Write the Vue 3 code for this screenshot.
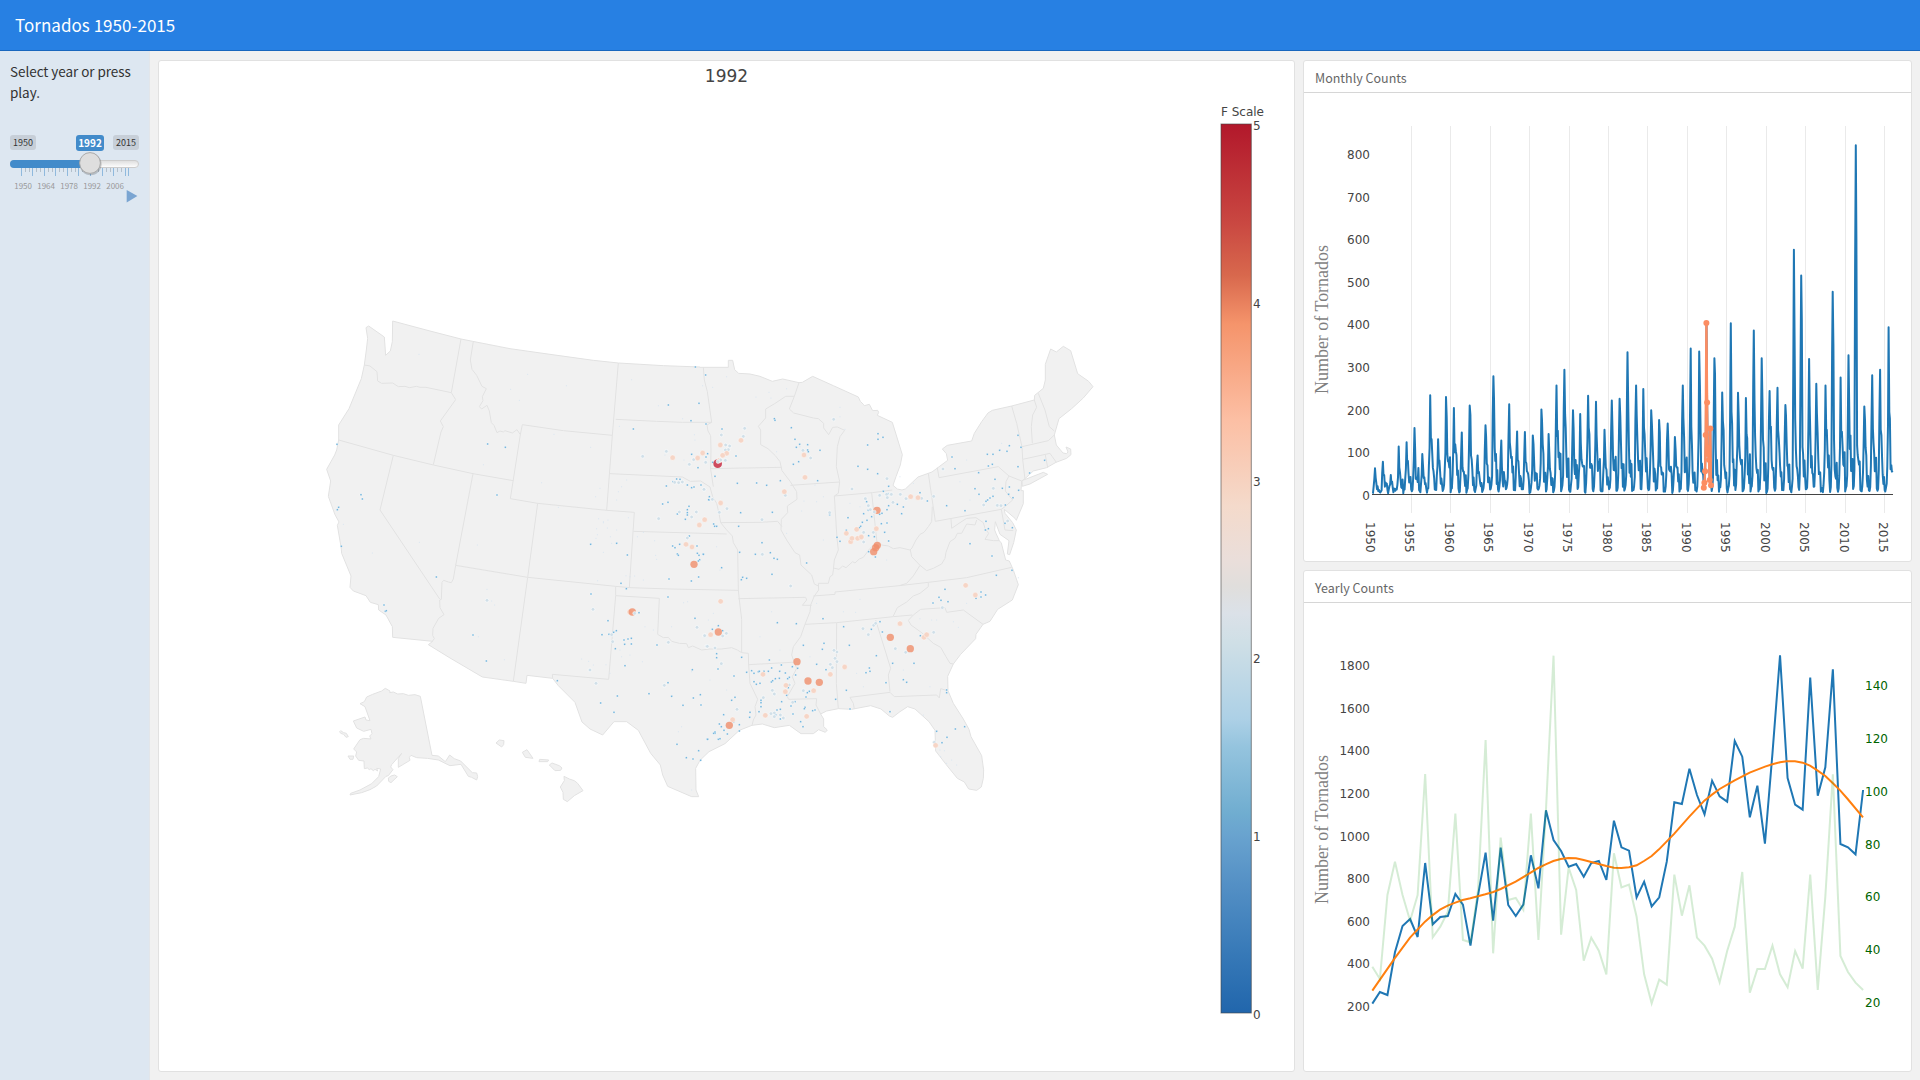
<script setup>
// Map geometry is stored in third-of-a-pixel units, in four quadrants.
const QUAD = { nw: [0, 0], sw: [0, 720], ne: [1170, 0], se: [1170, 720] }
const shift = (q, text) =>
  text.trim().split(/\s+/).map((p) => {
    const [x, y] = p.split(',').map(Number)
    return [x + QUAD[q][0], y + QUAD[q][1]]
  })
const toPath = (pts) => 'M' + pts.map((p) => p.join(' ')).join('L')

const mainland = toPath([
  ...shift('nw', '168,83 176,78 223,111 227,166 241,153 247,125 248,63 300,77 360,93 453,117 488,124 600,146 720,163 850,181 925,189 1060,197 1170,201'),
  ...shift('ne', '0,202 85,202 85,181 98,181 104,209 116,220 150,222 180,229 217,244 248,237 297,248 307,247 338,229 400,257 475,291 481,304 490,313 493,317 508,313 518,332 533,331 536,337 532,346 577,367 607,464 601,495 588,530 579,556 592,567 606,570 616,567 654,531 696,516 743,481 739,461 727,447 742,436 815,423 823,400 845,365 864,339 877,331 935,318 1003,300 1004,286 1030,265 1036,240 1036,193 1052,147 1069,156 1090,139 1112,152 1133,221 1166,244 1179,260 1150,294 1115,326 1077,356 1063,405 1069,435 1089,459 1100,461 1104,456 1098,441 1112,447 1113,464 1100,475 1068,487 1040,503 1000,513 975,536 965,543 963,572 970,572 970,611 949,661 945,655 913,628 915,640 938,668 949,690 941,728 929,764 922,762 927,722 900,703 886,665 884,690 888,700 898,722 904,729 917,780 928,783'),
  ...shift('se', '940,90 955,134 937,180 893,208 870,244 849,253 828,283 827,296 782,343 760,372 743,409 744,452 760,490 790,537 807,568 813,590 845,647 851,690 850,715 844,741 830,751 806,747 793,726 772,715 738,673 707,633 705,571 687,545 645,507 623,500 600,515 578,532 568,528 543,507 512,497 455,508 415,506 380,513 362,522 371,537 371,560 382,570 376,577 356,569 340,581 303,581 268,556 223,563 187,552 156,556 118,571 75,611 27,635 0,661'),
  ...shift('sw', '1157,685 1158,750 1166,770 1145,770 1073,739 1058,705 1051,675 1022,640 985,571 950,545 912,545 878,585 840,567 816,546 795,487 745,437 728,415 651,406 648,430 610,424 517,411 420,354 355,314 368,304 248,292 247,260 228,225 206,210 205,194 181,187 168,167 130,153 120,142 123,108 95,40'),
  ...shift('nw', '93,740 82,676 87,666 75,644 55,589 62,543 50,508 74,465 80,450 86,420 86,375 117,326 154,236 163,195 169,150 173,115'),
]) + 'Z'

const islands = [
  ['ne', '966,542 1030,517 1043,523 990,552 967,559'],
  ['sw', '226,445 240,453 239,458 250,456 263,462 280,461 295,466 315,464 331,469 366,646 385,648 406,665 419,645 433,656 452,663 487,698 500,699 503,710 500,720 485,712 475,709 453,673 420,677 385,660 352,655 320,653 303,646 298,652 300,661 265,682 265,655 275,640 245,674 242,681 249,689 235,707 228,709 200,738 180,749 155,758 120,765 122,760 150,750 185,731 206,710 212,687 200,685 203,693 195,688 190,692 183,686 178,689 172,684 163,686 162,663 146,661 137,648 140,636 131,627 150,599 161,595 183,597 179,588 186,581 183,568 161,574 140,564 130,543 165,531 168,540 180,542 165,500 150,491 163,485 170,471 188,463 215,453'],
  ['sw', '89,575 92,572 101,578 109,580 115,590 108,592 101,583 92,580'],
  ['sw', '114,648 131,648 129,658 120,658'],
  ['sw', '235,714 243,708 254,705 262,710 243,728 236,724'],
  ['sw', '558,609 568,600 582,602 581,614 575,621'],
  ['sw', '637,637 651,629 669,655 646,652'],
  ['sw', '689,658 716,660 713,665 687,665'],
  ['sw', '718,675 726,669 748,677 756,684 752,691 735,692'],
  ['sw', '762,709 778,717 793,722 803,730 819,752 793,767 772,785 760,778 759,757 751,741 763,722'],
].map(([q, t]) => toPath(shift(q, t)) + 'Z').join('')

const borders = [
  ['nw', '163,195 180,198 201,215 203,243 215,250 248,249 265,260 285,259 298,263 320,259 330,262 348,262 424,278'],
  ['nw', '453,117 424,278 437,299 391,363 400,380 393,396 370,494'],
  ['nw', '490,124 481,180 486,208 500,226 516,259 529,266 517,290 519,302 508,320 515,327 531,316 538,333 544,368 552,376 561,398 570,393 580,396 585,392 607,399 621,389 631,404'],
  ['nw', '86,420 250,466 370,495 489,521 610,542'],
  ['nw', '250,466 210,630 389,897'],
  ['nw', '489,521 437,796'],
  ['nw', '907,406 760,392 637,374 631,404 601,596 683,610 890,631 973,637 958,862'],
  ['nw', '925,189 907,406 890,631'],
  ['nw', '917,358 1040,364 1118,367 1205,367'],
  ['nw', '900,521 1117,531 1141,544 1172,543 1200,561 1208,590 1220,610 1227,640 1232,668 1250,690 1267,708 1270,728 1283,750 1285,870'],
  ['nw', '970,694 1250,702'],
  ['nw', '683,610 653,832 610,1144'],
  ['sw', '437,76 653,112 917,139 960,143 1080,147 1285,151'],
  ['sw', '437,76 430,117 424,128 415,126 401,121 396,127 394,178 389,180 390,203 402,224 386,235 369,265 368,286 373,296 366,305'],
  ['sw', '917,139 917,167 896,418 727,403 728,415'],
  ['sw', '917,167 1048,175 1043,283 1060,293 1075,292 1085,304 1108,310 1130,311 1135,323 1148,318 1175,330 1200,327 1235,327 1265,323 1282,330 1295,338'],
  ['ne', '10,202 13,240 22,275 35,367 21,375 24,393 32,407 33,450 32,508 40,560'],
  ['ne', '32,506 244,502'],
  ['ne', '62,668 180,667 233,664 246,680'],
  ['ne', '297,248 283,289 257,289 224,311 197,327 197,354 175,379 182,390 182,434 204,446 226,467 240,485 246,512 271,545 279,558 290,575 291,598 262,618 263,638 244,658 243,690 260,720 285,758 299,765 303,795 335,825 343,852 355,858'],
  ['ne', '283,289 268,327 281,339 340,354 355,356 371,370 371,384 386,404 398,382 412,381 434,391 420,410 412,440 409,500 419,545 415,580 403,588 517,578 577,570'],
  ['ne', '271,556 419,546'],
  ['ne', '403,588 411,715 415,750 403,780 400,810 398,825 390,830 385,850 355,850'],
  ['ne', '515,578 531,728'],
  ['ne', '400,804 417,808 428,798 438,803 458,785 465,789 478,777 490,772 510,745 531,728 545,735 565,738 580,746 600,743 630,750 636,744 648,720 660,703 672,697 685,680 695,665 697,620'],
  ['ne', '685,520 706,664 904,628 915,620 938,600 916,573 918,545 927,528 965,543'],
  ['ne', '712,503 717,533 895,500 912,515 927,528'],
  ['ne', '753,657 755,685 780,668 800,655 828,653 850,668 855,685 866,700 855,718 880,722 898,722'],
  ['ne', '830,660 825,675 800,672 785,700 772,700 765,715 750,725 738,757 735,775 725,792 700,805 680,812 660,796 635,770 631,750'],
  ['ne', '904,628 915,690 940,692'],
  ['ne', '935,318 950,370 966,440 968,478 975,538'],
  ['ne', '966,440 1045,422 1063,405'],
  ['ne', '1003,300 1010,322 998,345 994,380 997,430'],
  ['ne', '1015,280 1035,330 1048,380 1063,393'],
  ['ne', '968,478 1050,460 1057,470 1069,487'],
  ['ne', '1036,465 1043,503'],
  ['se', '340,168 405,163 405,156 598,137 685,127 800,113 935,82'],
  ['se', '598,137 620,130 640,108 660,76'],
  ['se', '685,127 685,140 660,160 640,168 620,186 592,203 580,228'],
  ['se', '315,253 410,248 580,230 637,225'],
  ['se', '849,253 790,210 740,217 735,203 662,208 640,225 625,241 633,255 665,278 700,310 722,322 738,350 750,370 760,372'],
  ['se', '410,248 409,430 415,506'],
  ['se', '527,240 555,330 572,385 565,405 570,455'],
  ['se', '463,507 460,490 450,472 570,457 583,470 710,465 718,474 722,446 743,452'],
  ['se', '355,130 356,150 343,168 332,195 330,215 315,253 302,290 280,320 275,345 283,367 290,385 277,410 285,430 262,470 266,478 350,476 348,495 362,522'],
  ['se', '115,176 317,172 320,180 307,196 335,196'],
  ['se', '115,150 118,180 125,238 125,338 145,340 146,375 150,430 173,478 165,500 168,525 160,540 156,556'],
  ['se', '146,374 275,367 285,367'],
].map(([q, t]) => toPath(shift(q, t))).join('')

const layers = [
  { cls: 'f0', r: 1.6, dots: [
    ['nw', '602,268 628,301 653,223 769,257 732,403 842,442 520,494 695,548 745,622 866,656 860,686 880,668 901,710 858,715 920,690 880,665 955,653 925,575 920,600 870,565 935,560 950,540 857,590 928,379 327,163 965,239 1045,317 1118,356 328,727 502,735 187,759 894,660 892,684 862,704 905,730 982,710 1037,766 1153,404 1178,257 100,673 1065,465 1122,480 1000,697 1034,722 880,757 1155,420'],
    ['sw', '531,148 545,183 554,195 505,290 583,359 948,107 960,110 974,108 997,365 960,345 935,350 815,357 888,374 836,364 850,375 900,400 1121,188 1133,185 1030,270 1085,260 1005,260 1145,395 1115,560 1145,750 1105,575 863,122 1040,58 930,330 1000,120'],
    ['ne', '260,266 213,294 80,230 168,291 38,262 207,277 420,322 420,350 435,388 312,603 345,555 305,633 370,590 350,605 230,455 300,440 450,610 480,620 600,530 640,550 780,545 810,600 905,430 800,480 50,740 260,700 370,720 560,780'],
    ['se', '480,178 467,217 430,215 350,190 660,236 710,240 760,245 775,262 695,240 800,190 215,215 180,290 60,90 40,220 330,350 470,400 490,440 610,390 690,440 720,630 733,632 740,670 722,650 755,660 770,675 670,525 955,113 240,330 80,450 30,420 25,240'],
  ] },
  { cls: 'f1', r: 3, dots: [
    ['nw', '1156,201 1187,225 1167,310 1075,315 1143,362 1188,372 970,387 81,433 533,432 586,442 153,584 157,597 86,622 82,629 94,739 561,585 842,733 920,730 952,765 1145,463 1164,503 1188,471 1193,461 1089,545 1100,537 1110,538 1069,558 1132,555 1145,563 1152,561 1173,555 1197,600 1058,612 1074,607 1137,619 1132,629 1132,638 1132,645 1102,642 1126,658 1138,708 1088,738 1095,743 1109,733 1132,736 1161,738 1102,762 1105,766 1162,760 1167,766 1180,763 1169,779 1165,783'],
    ['sw', '379,111 222,195 226,214 229,212 489,285 529,363 933,130 949,146 843,162 894,242 876,284 897,283 911,277 919,272 942,300 954,297 964,295 944,313 964,312 916,326 945,377 742,422 1074,428 922,468 872,489 912,517 1017,461 1085,469 1041,315 987,218 1077,117 1144,123 1166,111 1074,171 1155,235 1147,389 1119,496 1150,474 1171,464 1173,495 1192,598 1166,632 1101,613 1129,653 1149,657 1172,661'],
    ['ne', '66,387 108,468 38,487 45,529 28,590 26,599 112,550 170,549 200,556 241,542 122,638 217,637 41,672 44,679 50,679 116,679 186,728 119,757 166,763 211,758 222,775 232,778 320,789 65,803 223,356 225,361 274,383 285,418 299,433 289,442 323,434 308,449 323,450 325,455 360,451 296,485 280,493 353,542 503,435 534,401 549,412 534,418 474,499 503,508 533,521 566,559 550,574 564,581 574,585 498,598 500,605 389,644 444,653 439,691 411,712 420,724 505,631 515,650 561,629 566,617 592,613 610,621 605,641 620,597 561,669 544,671 554,697 566,723 506,707 523,710 491,641 501,661 487,667 482,679 478,683 546,640 539,643 526,771 506,755 660,578 682,603 740,617 795,632 825,566 836,518 756,471 765,506 862,463 879,463 899,451 921,454 928,437 954,406 963,442 865,498 877,493 954,500 885,538 837,583 870,594 863,600 858,604 879,589 907,565 928,561 926,583 939,593 956,571 989,519 1034,481 916,615 915,670 937,683 858,664 856,690 865,686 810,731 876,768 10,763'],
    ['se', '55,257 37,268 68,272 50,341 50,353 54,387 125,352 102,408 140,397 105,472 95,481 71,524 23,598 45,580 41,580 45,576 58,552 64,560 72,571 82,582 55,598 60,596 101,545 118,554 118,573 150,517 149,532 208,360 215,384 244,375 239,394 256,399 277,380 293,385 287,405 268,412 263,416 238,415 226,416 214,426 218,422 180,430 169,433 162,425 162,400 155,392 175,395 178,394 192,394 205,394 265,443 260,466 245,485 183,481 183,488 183,500 177,515 231,510 241,508 227,524 241,537 279,522 273,498 285,485 318,471 322,458 328,454 315,502 313,506 338,512 345,510 302,545 309,560 407,478 378,389 350,373 367,328 372,310 310,316 289,251 232,248 369,236 431,260 540,245 514,268 547,276 448,316 529,347 508,384 510,394 498,398 558,428 439,451 450,507 570,515 578,370 642,370 610,419 620,427 740,450 740,458 710,574 766,567 794,560 741,592 726,608 661,287 699,189 717,172 723,181 744,185 735,148 843,156 843,171 857,165 828,175 889,106 936,91 128,112 140,115 124,119 216,103'],
  ] },
  { cls: 'f2', r: 5.5, dots: [
    ['nw', '998,469 1069,454 1151,479 1138,493 1187,487 1094,547 1106,548 1117,546 1182,568 1108,636 1159,636 1145,651 1046,656 1132,714'],
    ['sw', '531,181 849,208 1161,262 1184,287 1190,319 1075,307 905,284 908,305 840,390 858,430 1063,436'],
    ['ne', '134,385 64,405 130,409 77,435 89,438 85,449 76,450 76,481 12,568 37,598 58,637 81,626 186,659 256,586 187,763 401,358 332,474 309,451 456,567 561,536 389,638 496,596 505,617 511,629 539,586 560,583 574,583 562,593 579,607 601,583 618,596 665,595 701,589 729,507 880,565 851,615 892,616 903,617 923,663 520,697 491,697 491,726'],
    ['se', '14,287 79,280 68,288 22,319 45,324 64,371 111,508 217,451 223,462 190,473 223,519 213,521 223,530 241,525 250,534 268,435 278,487 310,452 397,383 391,373 405,355 411,365 411,336 402,331 489,266 521,256 527,250 505,284 586,326 617,337 701,277 727,203 272,138 703,607'],
  ] },
  { cls: 'f3', r: 8, dots: [
    ['nw', '1088,473 1178,459 1163,474 1184,659 1168,675 1128,733 1146,741'],
    ['sw', '959,216'],
    ['ne', '123,421 61,435 80,460 68,466 253,575 62,609 312,465 315,532 632,590 654,593 439,700 470,688 529,686 452,725 456,715 473,715 484,711'],
    ['se', '62,184 32,284 189,403 258,436 256,455 341,452 391,403 434,381 600,251 672,292 680,284 797,136 826,165 196,526 320,529 98,539 707,616'],
  ] },
  { cls: 'f4', r: 11, dots: [
    ['nw', '1152,793'], ['sw', '967,216'],
    ['ne', '531,631 521,755 532,736 527,743'],
    ['se', '55,276 88,556 291,365 324,423 358,427 571,292 631,326'],
  ] },
  { cls: 'f5', r: 13, dots: [['ne', '53,491']] },
  { cls: 'f3', r: 8, dots: [['ne', '58,481']] },
  { cls: 'f2', r: 5.5, dots: [['ne', '62,480 54,485 523,636'], ['sw', '974,220']] },
].map((l) => ({ ...l, dots: l.dots.flatMap(([q, t]) => shift(q, t)) }))

const stops = [
  [0, '#b2182b'], [11, '#c94741'], [17, '#d8684d'], [22.5, '#f5946b'], [33.3, '#fcbfa4'],
  [43, '#f4dacb'], [49, '#eadeda'], [52, '#e0dedc'], [55, '#dbe1e8'], [58.3, '#cfdfe6'],
  [67, '#acd0e6'], [70, '#95c4de'], [77.5, '#70add0'], [80, '#69a3cf'], [85.5, '#5490c5'],
  [93, '#387ab8'], [100, '#2166ac'],
]
const scaleTicks = [5, 4, 3, 2, 1, 0]

// Monthly counts: yearly peaks spread over a seasonal profile.
const peaks = [62, 77, 46, 113, 123, 156, 95, 233, 130, 229, 203, 146, 209, 92, 163, 278, 127, 212, 148, 147, 139, 200, 142, 256, 293, 198, 189, 232, 218, 152, 221, 225, 334, 256, 248, 198, 175, 167, 135, 256, 343, 336, 403, 320, 240, 402, 239, 227, 385, 320, 243, 251, 210, 575, 514, 318, 260, 256, 476, 275, 327, 820, 207, 280, 293, 393]
const peakMonth = { 56: 3, 61: 3, 49: 4 }
let seed = 11
const rnd = () => ((seed = (seed * 16807) % 2147483647) / 2147483647)
const monthX = (m) => 1372.3 + (m * 7.892) / 12
const countY = (v) => 494.6 - v * 0.426
const y1992 = [16, 28, 55, 140, 403, 216, 95, 110, 82, 34, 155, 22]
const shape = [0.04, 0.08, 0.24, 0.6, 1, 0.76, 0.42, 0.26, 0.18, 0.12, 0.16, 0.04]
const monthly = peaks.flatMap((p, y) => {
  if (y === 42) return y1992
  const top = peakMonth[y] ?? (y < 20 ? 4 : y % 4 === 1 ? 5 : 4)
  const cap = Math.min(p, 240)
  return shape.map((_, m) => {
    const k = m - top + 4
    const f = shape[Math.max(0, Math.min(11, k))]
    if (f === 1) return p
    const spread = k > 5 && k < 11 ? rnd() * 0.28 * cap : rnd() * 12
    return Math.max(3, f * (f > 0.5 ? p : cap) * (0.6 + rnd() * 0.6) + spread - 3)
  })
})
const monthlyLine = monthly.map((v, i) => `${monthX(i + 0.1).toFixed(1)},${countY(v).toFixed(1)}`).join(' ')
const highlight = y1992.map((v, i) => [monthX(504 + i).toFixed(1), countY(v).toFixed(1)])
const highlightLine = highlight.map((p) => p.join(',')).join(' ')
const gridYears = Array.from({ length: 14 }, (_, i) => 1950 + i * 5)
const countTicks = [0, 100, 200, 300, 400, 500, 600, 700, 800]

// Yearly series, in third-of-a-pixel units.
const yearPts = (a) => a.map((y, i) => `${(217 + i * 22.65).toFixed(1)},${y}`).join(' ')
const yearly = yearPts([1301, 1266, 1275, 1147, 1068, 1047, 1101, 879, 1063, 1041, 1038, 972, 1004, 1127, 976, 848, 1052, 833, 1005, 1038, 1004, 856, 955, 721, 810, 843, 890, 882, 920, 879, 873, 930, 752, 832, 842, 982, 935, 1009, 982, 875, 697, 702, 596, 675, 733, 632, 679, 695, 513, 560, 742, 647, 821, 550, 256, 624, 704, 719, 323, 677, 592, 298, 822, 832, 853, 660])
const green = yearPts([1190, 1227, 975, 875, 975, 1052, 975, 612, 1102, 1070, 1025, 731, 1110, 1117, 960, 510, 1150, 803, 990, 984, 1020, 731, 1110, 720, 257, 1094, 893, 960, 1172, 1103, 1142, 1213, 850, 952, 944, 1040, 1213, 1300, 1229, 1244, 914, 1037, 946, 1103, 1127, 1166, 1237, 1143, 1070, 906, 1268, 1197, 1197, 1127, 1213, 1252, 1143, 1196, 914, 1260, 980, 613, 1158, 1206, 1238, 1260])
const trend = '217,1262 284,1165 330,1103 375,1055 397,1036 420,1019 443,1007 466,998 488,990 511,985 556,973 580,966 602,957 647,935 692,908 715,894 737,883 760,873 782,867 805,864 828,865 851,870 919,888 942,893 964,894 987,892 1010,886 1032,873 1055,858 1077,838 1123,791 1168,740 1213,692 1236,674 1259,657 1304,631 1349,608 1395,590 1417,583 1440,577 1460,574 1485,574 1508,578 1530,587 1552,601 1576,618 1598,639 1621,662 1643,687 1689,742'
const yearTicks = Array.from({ length: 9 }, (_, i) => 200 + i * 200)
const rightTicks = [20, 40, 60, 80, 100, 120, 140]

const majors = [64, 97, 132, 166, 202, 235, 271, 307, 340, 376, 385]
const minors = majors.slice(0, 9).flatMap((x) => [x + 12, x + 24])
const sliderYears = [1950, 1964, 1978, 1992, 2006]
</script>

<template>
  <div class="page">
    <header class="bar">Tornados 1950-2015</header>
    <div class="body">
      <aside class="side">
        <p class="hint">Select year or press play.</p>
        <div class="tags">
          <span class="tag">1950</span>
          <span class="tag current">1992</span>
          <span class="tag">2015</span>
        </div>
        <svg class="slider" width="150" height="54" viewBox="0 151 150 54">
          <defs>
            <linearGradient id="rail" x1="0" y1="0" x2="0" y2="1">
              <stop offset="0" stop-color="#ddd" /><stop offset="1" stop-color="#fff" />
            </linearGradient>
          </defs>
          <rect x="10.5" y="160.5" width="128" height="7" rx="3.5" fill="url(#rail)" stroke="#ccc" />
          <path d="M90 160H14a4 4 0 0 0 0 8H90z" fill="#428bca" />
          <rect v-for="x in majors" :key="x" :x="Math.floor(x / 3)" y="168" width="1" height="8" fill="#8fb9dd" />
          <rect v-for="x in minors" :key="'m' + x" :x="Math.floor(x / 3)" y="168" width="1" height="4" fill="#b3bfca" />
          <circle cx="90.6" cy="164.3" r="11" fill="#000" opacity=".18" />
          <circle cx="90" cy="163" r="10.4" fill="#dedede" stroke="#aaa" />
          <text v-for="(y, i) in sliderYears" :key="y" :x="23.1 + i * 23" y="189" class="slabel">{{ y }}</text>
          <path d="M126.7 190V202.4L137.4 196z" fill="#7aa5d2" />
        </svg>
      </aside>

      <main class="card map">
        <svg width="1135" height="1010" viewBox="159 61 1135 1010">
          <text x="726.5" y="82" class="title">1992</text>
          <g transform="translate(310 300) scale(.33333)">
            <path :d="mainland" class="land" />
            <path :d="islands" class="land" />
            <path :d="borders" class="border" />
            <g v-for="(l, i) in layers" :key="i" :class="l.cls">
              <circle v-for="(d, j) in l.dots" :key="j" :cx="d[0]" :cy="d[1]" :r="l.r" />
            </g>
          </g>
          <defs>
            <linearGradient id="fscale" x1="0" y1="0" x2="0" y2="1">
              <stop v-for="s in stops" :key="s[0]" :offset="s[0] + '%'" :stop-color="s[1]" />
            </linearGradient>
          </defs>
          <text x="1221" y="116" class="tick">F Scale</text>
          <rect x="1221" y="124" width="30.3" height="889" fill="url(#fscale)" stroke="#444" stroke-opacity=".6" />
          <text v-for="t in scaleTicks" :key="t" x="1253" :y="1018.9 - t * 177.75" class="tick">{{ t }}</text>
        </svg>
      </main>

      <section class="right">
        <div class="card">
          <h2>Monthly Counts</h2>
          <svg width="607" height="468" viewBox="1304 93 607 468">
            <template v-for="(y, i) in gridYears" :key="y">
              <rect v-if="i" :x="Math.round(1371.2 + i * 39.46)" y="126" width="1" height="387" fill="#eaeaea" />
              <text :transform="`translate(${1366 + i * 39.46} 522) rotate(90)`" class="tick">{{ y }}</text>
            </template>
            <text v-for="t in countTicks" :key="t" x="1370" :y="499.8 - t * 0.426" class="tick end">{{ t }}</text>
            <text transform="translate(1328 394) rotate(-90)" textLength="149" class="axis">Number of Tornados</text>
            <rect x="1372" y="494" width="521" height="1" fill="#444" />
            <polyline :points="monthlyLine" fill="none" stroke="#1f77b4" stroke-width="2" stroke-linejoin="round" />
            <polyline :points="highlightLine" fill="none" stroke="#fc8d62" stroke-width="2.4" />
            <circle v-for="p in highlight" :key="p[0]" :cx="p[0]" :cy="p[1]" r="3" fill="#fc8d62" />
          </svg>
        </div>
        <div class="card">
          <h2>Yearly Counts</h2>
          <svg width="607" height="468" viewBox="1304 603 607 468">
            <text v-for="t in yearTicks" :key="t" x="1370" :y="1011 - (t - 200) * 0.2131" class="tick end">{{ t }}</text>
            <text v-for="t in rightTicks" :key="'r' + t" x="1865" :y="1007 - (t - 20) * 2.641" class="tick grn">{{ t }}</text>
            <text transform="translate(1328 904) rotate(-90)" textLength="149" class="axis">Number of Tornados</text>
            <g transform="translate(1300 570) scale(.33333)" fill="none" stroke-width="6">
              <polyline :points="yearly" stroke="#1f77b4" />
              <polyline :points="trend" stroke="#ff7f0e" />
              <polyline :points="green" stroke="#2ca02c" stroke-opacity=".2" />
            </g>
          </svg>
        </div>
      </section>
    </div>
  </div>
</template>

<style>
html, body { margin: 0; background: #f1f1f1; }
</style>

<style scoped>
.page { width: 1920px; height: 1080px; display: flex; flex-direction: column; overflow: hidden; background: #f1f1f1; font-family: "Noto Sans CJK SC", sans-serif; }
.bar { height: 50px; border-bottom: 1px solid #1967be; background: #2780e3; color: #fff; font-size: 17px; letter-spacing: .03px; line-height: 50px; padding-left: 15px; }
.body { flex: 1; display: flex; min-height: 0; }
.side { width: 149px; border-right: 1px solid #e2e6ea; background: #dde7f1; box-sizing: content-box; }
.hint { margin: 10px 10px 0; font-size: 13.5px; line-height: 21px; color: #333; letter-spacing: -.05px; }
.tags { display: flex; align-items: flex-start; margin: 32px 0 0 10px; height: 16px; }
.tag { width: 26px; height: 15px; border-radius: 3px; background: #c7cfd8; color: #333; font-size: 9px; line-height: 15px; text-align: center; }
.tag.current { width: 28px; height: 16px; line-height: 16px; margin: 0 9px 0 40px; background: #428bca; color: #fff; font-size: 10px; font-weight: 700; }
.slider { display: block; }
.slabel { font: 8px "Noto Sans CJK SC", sans-serif; fill: #999; text-anchor: middle; }
.card { background: #fff; border: 1px solid #e1e1e1; border-radius: 3px; box-sizing: border-box; overflow: hidden; }
.card svg { display: block; }
.map { width: 1137px; height: 1012px; margin: 9px 0 0 8px; }
.right { display: flex; flex-direction: column; gap: 8px; margin: 9px 0 0 8px; }
.right .card { width: 609px; height: 502px; }
h2 { margin: 0; height: 31px; border-bottom: 1px solid #d6d6d6; padding-left: 11px; font-size: 12.5px; font-weight: 400; line-height: 33px; color: #666; }
.title { font: 17px "DejaVu Sans", sans-serif; fill: #444; text-anchor: middle; }
.tick { font: 12px "DejaVu Sans", sans-serif; fill: #444; }
.end { text-anchor: end; }
.grn { fill: #006400; }
.axis { font: 18px "Liberation Serif", serif; fill: #7f7f7f; }
.land { fill: #f1f1f1; stroke: #e2e2e2; stroke-width: 3; stroke-linejoin: round; }
.border { fill: none; stroke: #e2e2e2; stroke-width: 3; stroke-linejoin: round; }
.f0 { fill: #d3e3f1; }
.f1 { fill: #63acd9; stroke: #fff; stroke-width: 1.4; stroke-opacity: .8; }
.f2 { fill: #d0dfe8; stroke: #fff; stroke-width: 2; stroke-opacity: .8; }
.f3 { fill: #f6d5c6; stroke: #fff; stroke-width: 1.5; stroke-opacity: .7; }
.f4 { fill: #f08e6b; fill-opacity: .8; }
.f5 { fill: #c5203a; fill-opacity: .8; }
</style>
